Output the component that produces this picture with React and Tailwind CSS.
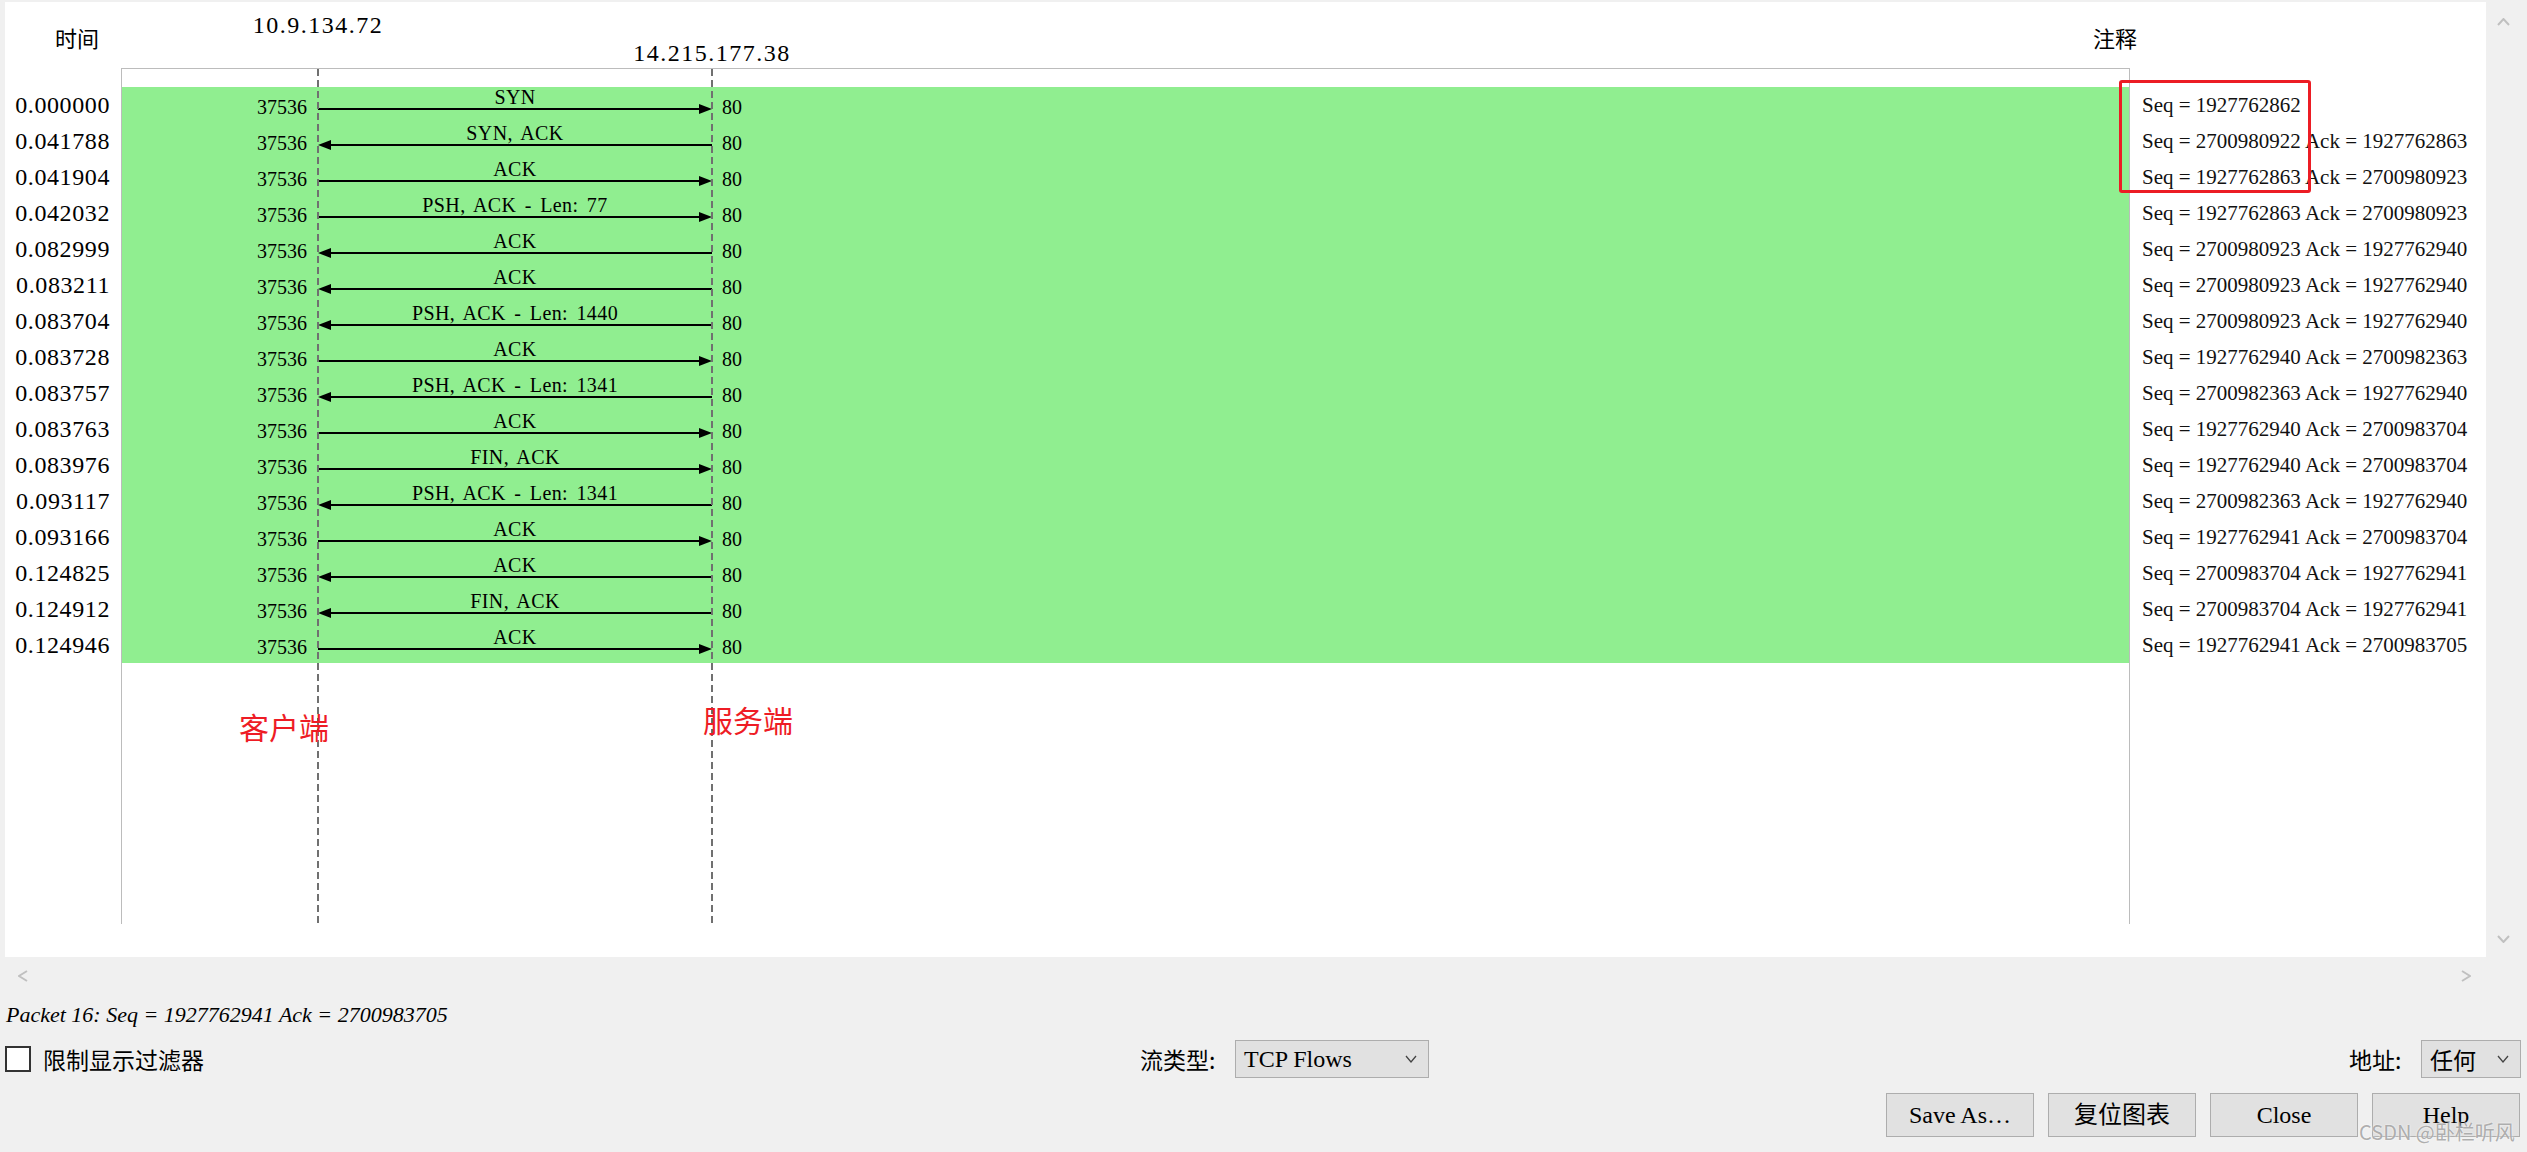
import React from "react";

const SERIF = "[font-family:'Liberation_Serif','Noto_Sans_CJK_SC',serif]";
const CJK = "[font-family:'Noto_Sans_CJK_SC','Noto_Sans',sans-serif]";

const rows = [
  ["0.000000", "SYN", "r", "Seq = 1927762862"],
  ["0.041788", "SYN, ACK", "l", "Seq = 2700980922 Ack = 1927762863"],
  ["0.041904", "ACK", "r", "Seq = 1927762863 Ack = 2700980923"],
  ["0.042032", "PSH, ACK - Len: 77", "r", "Seq = 1927762863 Ack = 2700980923"],
  ["0.082999", "ACK", "l", "Seq = 2700980923 Ack = 1927762940"],
  ["0.083211", "ACK", "l", "Seq = 2700980923 Ack = 1927762940"],
  ["0.083704", "PSH, ACK - Len: 1440", "l", "Seq = 2700980923 Ack = 1927762940"],
  ["0.083728", "ACK", "r", "Seq = 1927762940 Ack = 2700982363"],
  ["0.083757", "PSH, ACK - Len: 1341", "l", "Seq = 2700982363 Ack = 1927762940"],
  ["0.083763", "ACK", "r", "Seq = 1927762940 Ack = 2700983704"],
  ["0.083976", "FIN, ACK", "r", "Seq = 1927762940 Ack = 2700983704"],
  ["0.093117", "PSH, ACK - Len: 1341", "l", "Seq = 2700982363 Ack = 1927762940"],
  ["0.093166", "ACK", "r", "Seq = 1927762941 Ack = 2700983704"],
  ["0.124825", "ACK", "l", "Seq = 2700983704 Ack = 1927762941"],
  ["0.124912", "FIN, ACK", "l", "Seq = 2700983704 Ack = 1927762941"],
  ["0.124946", "ACK", "r", "Seq = 1927762941 Ack = 2700983705"],
];

function Arrow({ dir }) {
  if (dir === "r") {
    return (
      <svg width="394" height="10" viewBox="0 0 394 10" className="block -mt-[3px]">
        <line x1="0" y1="5" x2="383" y2="5" stroke="#000" strokeWidth="2" />
        <polygon points="381,0 394,5 381,10" fill="#000" />
      </svg>
    );
  }
  return (
    <svg width="394" height="10" viewBox="0 0 394 10" className="block -mt-[3px]">
      <line x1="11" y1="5" x2="394" y2="5" stroke="#000" strokeWidth="2" />
      <polygon points="13,0 0,5 13,10" fill="#000" />
    </svg>
  );
}

function Chevron({ dir, color = "#c0c0c0", w = 12, h = 8, sw = 2 }) {
  let pts;
  if (dir === "up") pts = `1,${h - 1} ${w / 2},1 ${w - 1},${h - 1}`;
  else if (dir === "down") pts = `1,1 ${w / 2},${h - 1} ${w - 1},1`;
  else if (dir === "left") pts = `${w - 1},1 1,${h / 2} ${w - 1},${h - 1}`;
  else pts = `1,1 ${w - 1},${h / 2} 1,${h - 1}`;
  return (
    <svg width={w} height={h} viewBox={`0 0 ${w} ${h}`} className="block">
      <polyline points={pts} fill="none" stroke={color} strokeWidth={sw} />
    </svg>
  );
}

export default function App() {
  return (
    <div className={`relative w-[2527px] h-[1152px] overflow-hidden bg-[#f0f0f0] text-black ${SERIF}`}>
      {/* top area: panel + scrollbars */}
      <div className="flex h-[994px]">
        <div className="flex flex-col w-[2486px]">
          <div className="mt-[2px] ml-[5px] h-[955px] w-[2481px] bg-white flex flex-col">
            {/* header */}
            <div className="flex h-[66px] items-start">
              <div className={`w-[144px] text-center pt-[20px] leading-[30px] text-[22px] ${CJK}`}>时间</div>
              <div className="w-[338px] text-center pt-[8px] leading-[30px] text-[24px] tracking-[1.5px]">10.9.134.72</div>
              <div className="w-[450px] text-center pt-[36px] leading-[30px] text-[24px] tracking-[1.5px]">14.215.177.38</div>
              <div className={`ml-[1156px] pt-[20px] leading-[30px] text-[22px] ${CJK}`}>注释</div>
            </div>
            {/* body */}
            <div className="flex">
              {/* time column */}
              <div className="w-[116px] pt-[19px] flex flex-col">
                {rows.map((r, i) => (
                  <div key={i} className="h-[36px] pt-[3px] leading-[30px] text-[24px] text-right pr-[11px] tracking-[0.6px]">
                    {r[0]}
                  </div>
                ))}
              </div>
              {/* graph box */}
              <div className="relative w-[2009px] h-[856px] border-t border-l border-r border-[#bcbcbc] pt-[18px] flex flex-col">
                {rows.map((r, i) => (
                  <div key={i} className="flex h-[36px] bg-[#90ee90]">
                    <div className="w-[196px] pr-[11px] text-right pt-[10px] leading-[20px] text-[20px]">37536</div>
                    <div className="w-[394px] flex flex-col items-center">
                      <div className="h-[20px] leading-[20px] text-[20px] whitespace-pre tracking-[0.4px] [word-spacing:3px]">{r[1]}</div>
                      <Arrow dir={r[2]} />
                    </div>
                    <div className="pl-[10px] pt-[10px] leading-[20px] text-[20px]">80</div>
                  </div>
                ))}
                <div className="absolute top-0 bottom-0 left-[195px] w-[2px] [background-image:repeating-linear-gradient(to_bottom,#707070_0px,#707070_7px,transparent_7px,transparent_11px)]" />
                <div className="absolute top-0 bottom-0 left-[589px] w-[2px] [background-image:repeating-linear-gradient(to_bottom,#707070_0px,#707070_7px,transparent_7px,transparent_11px)]" />
              </div>
              {/* annotation column */}
              <div className="flex-1 pt-[19px] pl-[12px] flex flex-col">
                {rows.map((r, i) => (
                  <div key={i} className="h-[36px] pt-[3px] leading-[30px] text-[21px] whitespace-pre text-[#111]">
                    {r[3]}
                  </div>
                ))}
              </div>
            </div>
          </div>
          {/* horizontal scrollbar */}
          <div className="h-[37px] flex items-center justify-between pl-[18px] pr-[15px]">
            <Chevron dir="left" w={10} h={12} />
            <Chevron dir="right" w={10} h={12} />
          </div>
        </div>
        {/* vertical scrollbar */}
        <div className="w-[41px] h-[957px] flex flex-col justify-between items-start pl-[11px] pt-[18px] pb-[14px]">
          <Chevron dir="up" w={13} h={8} />
          <Chevron dir="down" w={13} h={8} />
        </div>
      </div>

      {/* status line */}
      <div className="h-[42px] pl-[6px] leading-[42px] text-[22px] italic whitespace-pre">
        Packet 16: Seq = 1927762941 Ack = 2700983705
      </div>

      {/* controls row */}
      <div className="h-[46px] flex items-center">
        <div className="w-[1140px] flex items-center pl-[5px]">
          <div className="w-[26px] h-[26px] border-2 border-[#333] bg-white" />
          <div className={`ml-[12px] text-[23px] leading-[30px] ${CJK}`}>限制显示过滤器</div>
        </div>
        <div className={`w-[95px] text-[23px] leading-[30px] ${CJK}`}>流类型:</div>
        <div className="w-[194px] h-[38px] flex items-center justify-between pl-[8px] pr-[11px] border border-[#adadad] bg-[#e1e1e1]">
          <span className="text-[24px] leading-[30px]">TCP Flows</span>
          <Chevron dir="down" color="#444" w={12} h={8} sw={1.3} />
        </div>
        <div className="flex-1" />
        <div className={`w-[72px] text-[23px] leading-[30px] ${CJK}`}>地址:</div>
        <div className="w-[100px] h-[38px] flex items-center justify-between pl-[8px] pr-[11px] border border-[#adadad] bg-[#e1e1e1]">
          <span className={`text-[23px] leading-[30px] ${CJK}`}>任何</span>
          <Chevron dir="down" color="#444" w={12} h={8} sw={1.3} />
        </div>
        <div className="w-[6px]" />
      </div>

      {/* buttons row */}
      <div className="mt-[11px] flex justify-end gap-[14px] pr-[7px]">
        {["Save As…", "复位图表", "Close", "Help"].map((t) => (
          <div key={t} className="w-[148px] h-[44px] flex items-center justify-center border border-[#adadad] bg-[#e1e1e1] text-[24px] leading-[30px]">
            {t}
          </div>
        ))}
      </div>

      {/* overlays: hand-drawn annotations */}
      <div className={`absolute left-[239px] top-[711px] text-[30px] leading-[30px] text-[#ee1c25] ${CJK}`}>客户端</div>
      <div className={`absolute left-[703px] top-[704px] text-[30px] leading-[30px] text-[#ee1c25] ${CJK}`}>服务端</div>
      <div className="absolute left-[2119px] top-[80px] w-[192px] h-[113px] border-[3px] border-[#ec1c24] rounded-[3px]" />
      <div className={`absolute left-[2359px] top-[1120px] text-[20px] leading-[24px] text-[#9a9a9acc] [text-shadow:0_0_2px_#ffffff] ${CJK}`}>
        CSDN @卧栏听风
      </div>
    </div>
  );
}
